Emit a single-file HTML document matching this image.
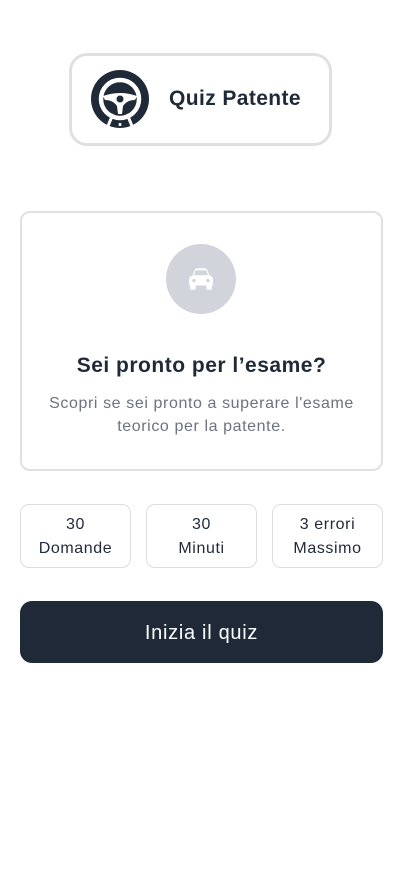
<!DOCTYPE html><html><head><style>
body{margin:0;width:402px;height:874px;background:#fff;font-family:"Liberation Sans",sans-serif;color:#1f2937;position:relative}
.a{position:absolute;box-sizing:border-box}
.s{position:absolute;box-sizing:border-box;top:504px;width:111px;height:64px;border:1px solid #ddd;border-radius:9px;text-align:center;font-size:16px;letter-spacing:0.6px;line-height:24px;padding-top:8px}
</style></head><body>
<div class="a" style="left:69px;top:53px;width:263px;height:93px;border:3px solid #e0e0e0;border-radius:18px"></div>
<svg class="a" style="left:91px;top:70px" width="58" height="58" viewBox="0 0 58 58">
<circle cx="29" cy="29" r="29" fill="#1f2937"/>
<circle cx="29" cy="29" r="19" fill="none" stroke="#fff" stroke-width="4.5"/>
<path d="M12 26 Q29 20 46 26 L44 30 Q36 30 32 36 L31 44 L27 44 L26 36 Q22 30 14 30Z" fill="#fff"/>
<circle cx="29" cy="29" r="3.5" fill="#1f2937"/>
<path d="M22 44 L17 56 M36 44 L41 56" stroke="#fff" stroke-width="3"/>
<path d="M29 47 v3 M29 53 v3" stroke="#fff" stroke-width="2.5"/>
</svg>
<div class="a" style="left:169px;top:87px;font-size:21px;letter-spacing:0.4px;font-weight:bold;color:#1f2937">Quiz Patente</div>
<div class="a" style="left:20px;top:211px;width:363px;height:260px;border:2px solid #e0e0e0;border-radius:10px"></div>
<div class="a" style="left:166px;top:244px;width:70px;height:70px;border-radius:50%;background:#d1d5db"></div>
<svg class="a" style="left:187px;top:267px" width="28" height="24" viewBox="0 0 26 22">
<path d="M5 8 L7.5 2 Q8 1 9.5 1 H16.5 Q18 1 18.5 2 L21 8 Q24 8.5 24 11 V17 H2 V11 Q2 8.5 5 8Z" fill="#fff"/>
<rect x="3" y="16" width="5" height="5" rx="1" fill="#fff"/><rect x="18" y="16" width="5" height="5" rx="1" fill="#fff"/>
<path d="M8 3 H18 L19.5 7.5 H6.5Z" fill="#d1d5db"/>
<circle cx="6.5" cy="12.5" r="1.6" fill="#d1d5db"/><circle cx="19.5" cy="12.5" r="1.6" fill="#d1d5db"/>
</svg>
<div class="a" style="left:20px;width:363px;top:354px;text-align:center;font-size:21px;letter-spacing:0.5px;font-weight:bold">Sei pronto per l’esame?</div>
<div class="a" style="left:20px;width:363px;top:392px;text-align:center;font-size:16px;letter-spacing:0.6px;line-height:23px;color:#6b7280">Scopri se sei pronto a superare l'esame<br>teorico per la patente.</div>
<div class="s" style="left:20px">30<br>Domande</div>
<div class="s" style="left:146px">30<br>Minuti</div>
<div class="s" style="left:272px">3 errori<br>Massimo</div>
<div class="a" style="left:20px;top:601px;width:363px;height:62px;border-radius:12px;background:#1f2937;color:#fff;font-size:20px;letter-spacing:0.7px;text-align:center;line-height:64px">Inizia il quiz</div>
</body></html>
